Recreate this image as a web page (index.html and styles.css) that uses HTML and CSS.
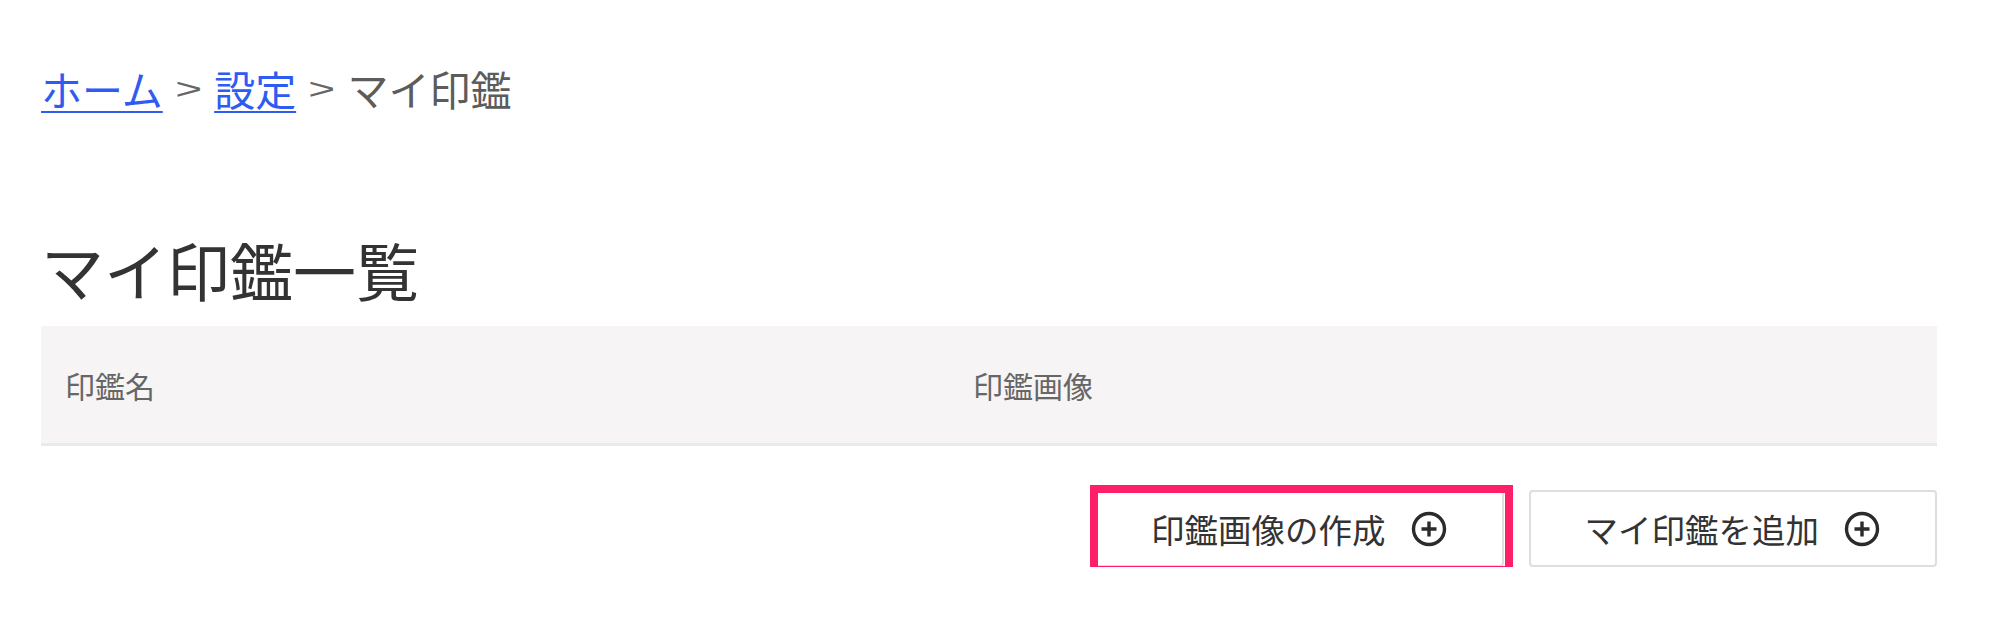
FILE: index.html
```html
<!DOCTYPE html>
<html lang="ja">
<head>
    <meta charset="UTF-8">
    <meta name="viewport" content="width=device-width, initial-scale=1.0">
    <title>マイ印鑑一覧</title>
    <link rel="stylesheet" href="styles.css">
</head>
<body>
    <main class="page">
        <nav class="breadcrumb">
            <a href="#" class="crumb-link">ホーム</a>
            <span class="crumb-sep">&gt;</span>
            <a href="#" class="crumb-link">設定</a>
            <span class="crumb-sep">&gt;</span>
            <span class="crumb-current">マイ印鑑</span>
        </nav>

        <h1 class="page-title">マイ印鑑一覧</h1>

        <table class="stamp-table">
            <thead>
                <tr>
                    <th class="col-name">印鑑名</th>
                    <th class="col-image">印鑑画像</th>
                </tr>
            </thead>
            <tbody></tbody>
        </table>

        <div class="actions">
            <span class="highlight">
                <button class="action-btn">
                    印鑑画像の作成
                    <svg class="plus-icon" viewBox="0 0 36 36" aria-hidden="true">
                        <circle cx="18" cy="18" r="15.5" />
                        <path d="M18 10.5v15M10.5 18h15" />
                    </svg>
                </button>
            </span>
            <button class="action-btn">
                マイ印鑑を追加
                <svg class="plus-icon" viewBox="0 0 36 36" aria-hidden="true">
                    <circle cx="18" cy="18" r="15.5" />
                    <path d="M18 10.5v15M10.5 18h15" />
                </svg>
            </button>
        </div>
    </main>
</body>
</html>
```

FILE: styles.css
```css
body {
    margin: 0;
    background: #ffffff;
    font-family: "Noto Sans CJK JP", "Noto Sans", sans-serif;
    color: #333333;
}
.page {
    padding: 58px 62px 0 41px;
}
.breadcrumb {
    display: flex;
    align-items: center;
    gap: 14px;
    font-size: 41px;
    line-height: 60px;
    color: #5c5c5c;
}
.crumb-link {
    color: #2f5cf0;
    text-decoration: underline;
    text-decoration-thickness: 2px;
    text-underline-offset: 5px;
}
.crumb-sep {
    font-family: "Liberation Sans", sans-serif;
    font-size: 40px;
    color: #666666;
    transform: scale(1.15, 0.75);
}
.page-title {
    margin: 114px 0 20px;
    font-size: 63px;
    font-weight: normal;
    line-height: 74px;
    color: #333333;
}
.stamp-table {
    width: 100%;
    border-collapse: collapse;
}
.stamp-table th {
    height: 117px;
    padding: 0 24px;
    background: #f6f4f4;
    border-bottom: 3px solid #e7ebef;
    font-size: 30px;
    font-weight: normal;
    color: #666666;
    text-align: left;
}
.col-name {
    width: 860px;
}
.actions {
    display: flex;
    justify-content: flex-end;
    gap: 25px;
    margin-top: 44px;
}
.highlight {
    position: relative;
    display: flex;
}
.highlight::after {
    content: "";
    position: absolute;
    left: -5px;
    right: -9px;
    top: -5px;
    bottom: -7px;
    border: 8px solid #ff1f69;
    pointer-events: none;
}
.action-btn {
    display: flex;
    align-items: center;
    gap: 25px;
    height: 77px;
    padding: 0 55px 0 54px;
    background: #ffffff;
    border: 2px solid #dedede;
    border-radius: 4px;
    font-family: "Noto Sans CJK JP", "Noto Sans", sans-serif;
    font-size: 33.5px;
    color: #333333;
    cursor: pointer;
}
.plus-icon {
    width: 36px;
    height: 36px;
    fill: none;
    stroke: #2b2b2b;
    stroke-width: 3.4;
}
```
